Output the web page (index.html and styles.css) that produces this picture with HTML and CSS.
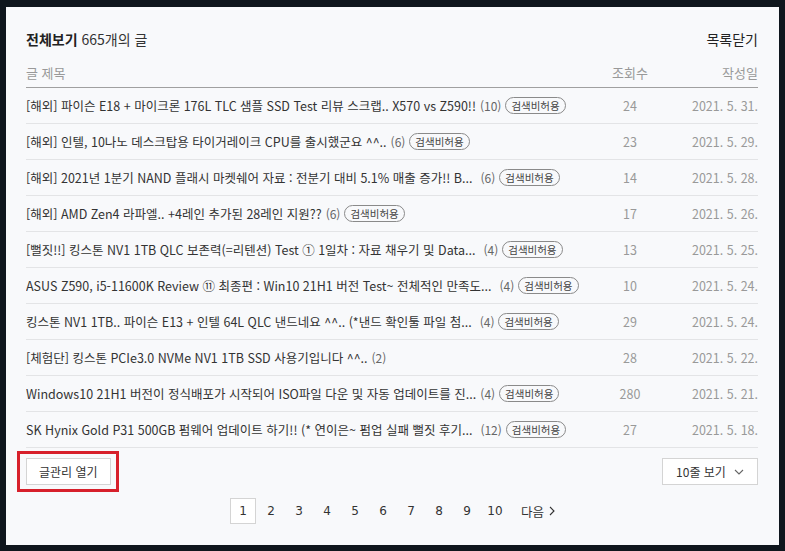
FILE: index.html
```html
<!DOCTYPE html>
<html lang="ko">
<head>
    <meta charset="UTF-8">
    <title>전체보기</title>
    <link rel="stylesheet" href="styles.css">
</head>
<body>
    <div class="panel">
        <div class="list-head">
            <h2><strong>전체보기</strong> 665개의 글</h2>
            <a href="#" class="close-list">목록닫기</a>
        </div>

        <div class="post-table">
            <div class="row head">
                <span class="col-title">글 제목</span>
                <span class="col-views">조회수</span>
                <span class="col-date">작성일</span>
            </div>

            <div class="row">
                <span class="col-title"><a href="#">[해외] 파이슨 E18 + 마이크론 176L TLC 샘플 SSD Test 리뷰 스크랩.. X570 vs Z590!!</a><em>(10)</em><i class="badge">검색비허용</i></span>
                <span class="col-views">24</span>
                <span class="col-date">2021. 5. 31.</span>
            </div>
            <div class="row">
                <span class="col-title"><a href="#">[해외] 인텔, 10나노 데스크탑용 타이거레이크 CPU를 출시했군요 ^^..</a><em>(6)</em><i class="badge">검색비허용</i></span>
                <span class="col-views">23</span>
                <span class="col-date">2021. 5. 29.</span>
            </div>
            <div class="row">
                <span class="col-title"><a href="#">[해외] 2021년 1분기 NAND 플래시 마켓쉐어 자료 : 전분기 대비 5.1% 매출 증가!! B...</a><em class="gap">(6)</em><i class="badge">검색비허용</i></span>
                <span class="col-views">14</span>
                <span class="col-date">2021. 5. 28.</span>
            </div>
            <div class="row">
                <span class="col-title"><a href="#">[해외] AMD Zen4 라파엘.. +4레인 추가된 28레인 지원??</a><em>(6)</em><i class="badge">검색비허용</i></span>
                <span class="col-views">17</span>
                <span class="col-date">2021. 5. 26.</span>
            </div>
            <div class="row">
                <span class="col-title"><a href="#">[뻘짓!!] 킹스톤 NV1 1TB QLC 보존력(=리텐션) Test ① 1일차 : 자료 채우기 및 Data...</a><em class="gap">(4)</em><i class="badge">검색비허용</i></span>
                <span class="col-views">13</span>
                <span class="col-date">2021. 5. 25.</span>
            </div>
            <div class="row">
                <span class="col-title"><a href="#">ASUS Z590, i5-11600K Review ⑪ 최종편 : Win10 21H1 버전 Test~ 전체적인 만족도...</a><em class="gap">(4)</em><i class="badge">검색비허용</i></span>
                <span class="col-views">10</span>
                <span class="col-date">2021. 5. 24.</span>
            </div>
            <div class="row">
                <span class="col-title"><a href="#">킹스톤 NV1 1TB.. 파이슨 E13 + 인텔 64L QLC 낸드네요 ^^.. (*낸드 확인툴 파일 첨...</a><em class="gap">(4)</em><i class="badge">검색비허용</i></span>
                <span class="col-views">29</span>
                <span class="col-date">2021. 5. 24.</span>
            </div>
            <div class="row">
                <span class="col-title"><a href="#">[체험단] 킹스톤 PCIe3.0 NVMe NV1 1TB SSD 사용기입니다 ^^..</a><em>(2)</em></span>
                <span class="col-views">28</span>
                <span class="col-date">2021. 5. 22.</span>
            </div>
            <div class="row">
                <span class="col-title"><a href="#">Windows10 21H1 버전이 정식배포가 시작되어 ISO파일 다운 및 자동 업데이트를 진...</a><em>(4)</em><i class="badge">검색비허용</i></span>
                <span class="col-views">280</span>
                <span class="col-date">2021. 5. 21.</span>
            </div>
            <div class="row">
                <span class="col-title"><a href="#">SK Hynix Gold P31 500GB 펌웨어 업데이트 하기!! (* 연이은~ 펌업 실패 뻘짓 후기...</a><em class="gap">(12)</em><i class="badge">검색비허용</i></span>
                <span class="col-views">27</span>
                <span class="col-date">2021. 5. 18.</span>
            </div>
        </div>

        <div class="list-tools">
            <span class="mark-box"><button class="tool-btn">글관리 열기</button></span>
            <button class="tool-btn rows-btn">10줄 보기
                <svg width="10" height="6" viewBox="0 0 10 6"><path d="M1 1l4 4 4-4" fill="none" stroke="#666" stroke-width="1.1"/></svg>
            </button>
        </div>

        <div class="paging">
            <a href="#" class="page on">1</a>
            <a href="#" class="page">2</a>
            <a href="#" class="page">3</a>
            <a href="#" class="page">4</a>
            <a href="#" class="page">5</a>
            <a href="#" class="page">6</a>
            <a href="#" class="page">7</a>
            <a href="#" class="page">8</a>
            <a href="#" class="page">9</a>
            <a href="#" class="page">10</a>
            <a href="#" class="next">다음
                <svg width="6" height="10" viewBox="0 0 6 10"><path d="M1 1l4 4-4 4" fill="none" stroke="#333" stroke-width="1.1"/></svg>
            </a>
        </div>
    </div>
</body>
</html>
```

FILE: styles.css
```css
body {
    margin: 0;
    background: #0f161d;
    font-family: "Noto Sans CJK KR", "Noto Sans", sans-serif;
    color: #333;
}

a {
    color: inherit;
    text-decoration: none;
}

.panel {
    margin: 7px 6px 6px 6px;
    height: 538px;
    box-sizing: border-box;
    background: #f8f9fb;
    padding: 20px 21px 0 20px;
}

.list-head {
    display: flex;
    justify-content: space-between;
    align-items: center;
    height: 24px;
}

.list-head h2 {
    margin: 0;
    font-size: 14px;
    font-weight: normal;
    color: #333;
}

.list-head h2 strong {
    font-weight: bold;
    color: #222;
}

.close-list {
    font-size: 14px;
    color: #222;
}

.post-table {
    margin-top: 7px;
}

.row {
    display: flex;
    align-items: center;
    height: 35px;
    border-bottom: 1px solid #e3e4e6;
    font-size: 12.5px;
}

.row.head {
    height: 29px;
    border-bottom: 1px solid #a0a0a0;
    color: #999;
    font-size: 13px;
}

.col-title {
    flex: 1;
    display: flex;
    align-items: center;
    white-space: nowrap;
    overflow: hidden;
}

.col-title a {
    color: #333;
}

.col-title em {
    font-style: normal;
    font-size: 12px;
    color: #666;
    margin-left: 4px;
}

.col-title em.gap {
    margin-left: 8px;
}

.badge {
    font-style: normal;
    font-size: 10.5px;
    color: #444;
    border: 1px solid #8a8a8a;
    border-radius: 9px;
    height: 17px;
    line-height: 15px;
    padding: 0 5px;
    margin-left: 4px;
    box-sizing: border-box;
}

.col-views {
    width: 60px;
    text-align: center;
    color: #999;
}

.col-date {
    width: 98px;
    text-align: right;
    color: #999;
}

.list-tools {
    display: flex;
    justify-content: space-between;
    align-items: flex-start;
    margin-top: 3px;
}

.mark-box {
    margin-left: -9px;
    padding: 4px 5px 4px 6px;
    border: 3px solid #d7202b;
}

.tool-btn {
    font-family: "Noto Sans CJK KR", sans-serif;
    font-size: 12px;
    color: #333;
    background: #fff;
    border: 1px solid #d4d4d4;
    height: 27px;
    padding: 0 12px;
    display: block;
}

.rows-btn {
    margin-top: 7px;
    width: 96px;
    display: flex;
    align-items: center;
    justify-content: center;
    gap: 8px;
}

.paging {
    display: flex;
    justify-content: center;
    align-items: center;
    margin-top: 6px;
}

.page {
    width: 26px;
    height: 26px;
    margin: 0 1px;
    display: flex;
    align-items: center;
    justify-content: center;
    font-family: "DejaVu Sans", sans-serif;
    font-size: 12px;
    color: #333;
    box-sizing: border-box;
}

.page.on {
    border: 1px solid #d4d4d4;
    background: #fff;
}

.next {
    margin-left: 12px;
    font-size: 12.5px;
    display: flex;
    align-items: center;
    gap: 5px;
}
```
